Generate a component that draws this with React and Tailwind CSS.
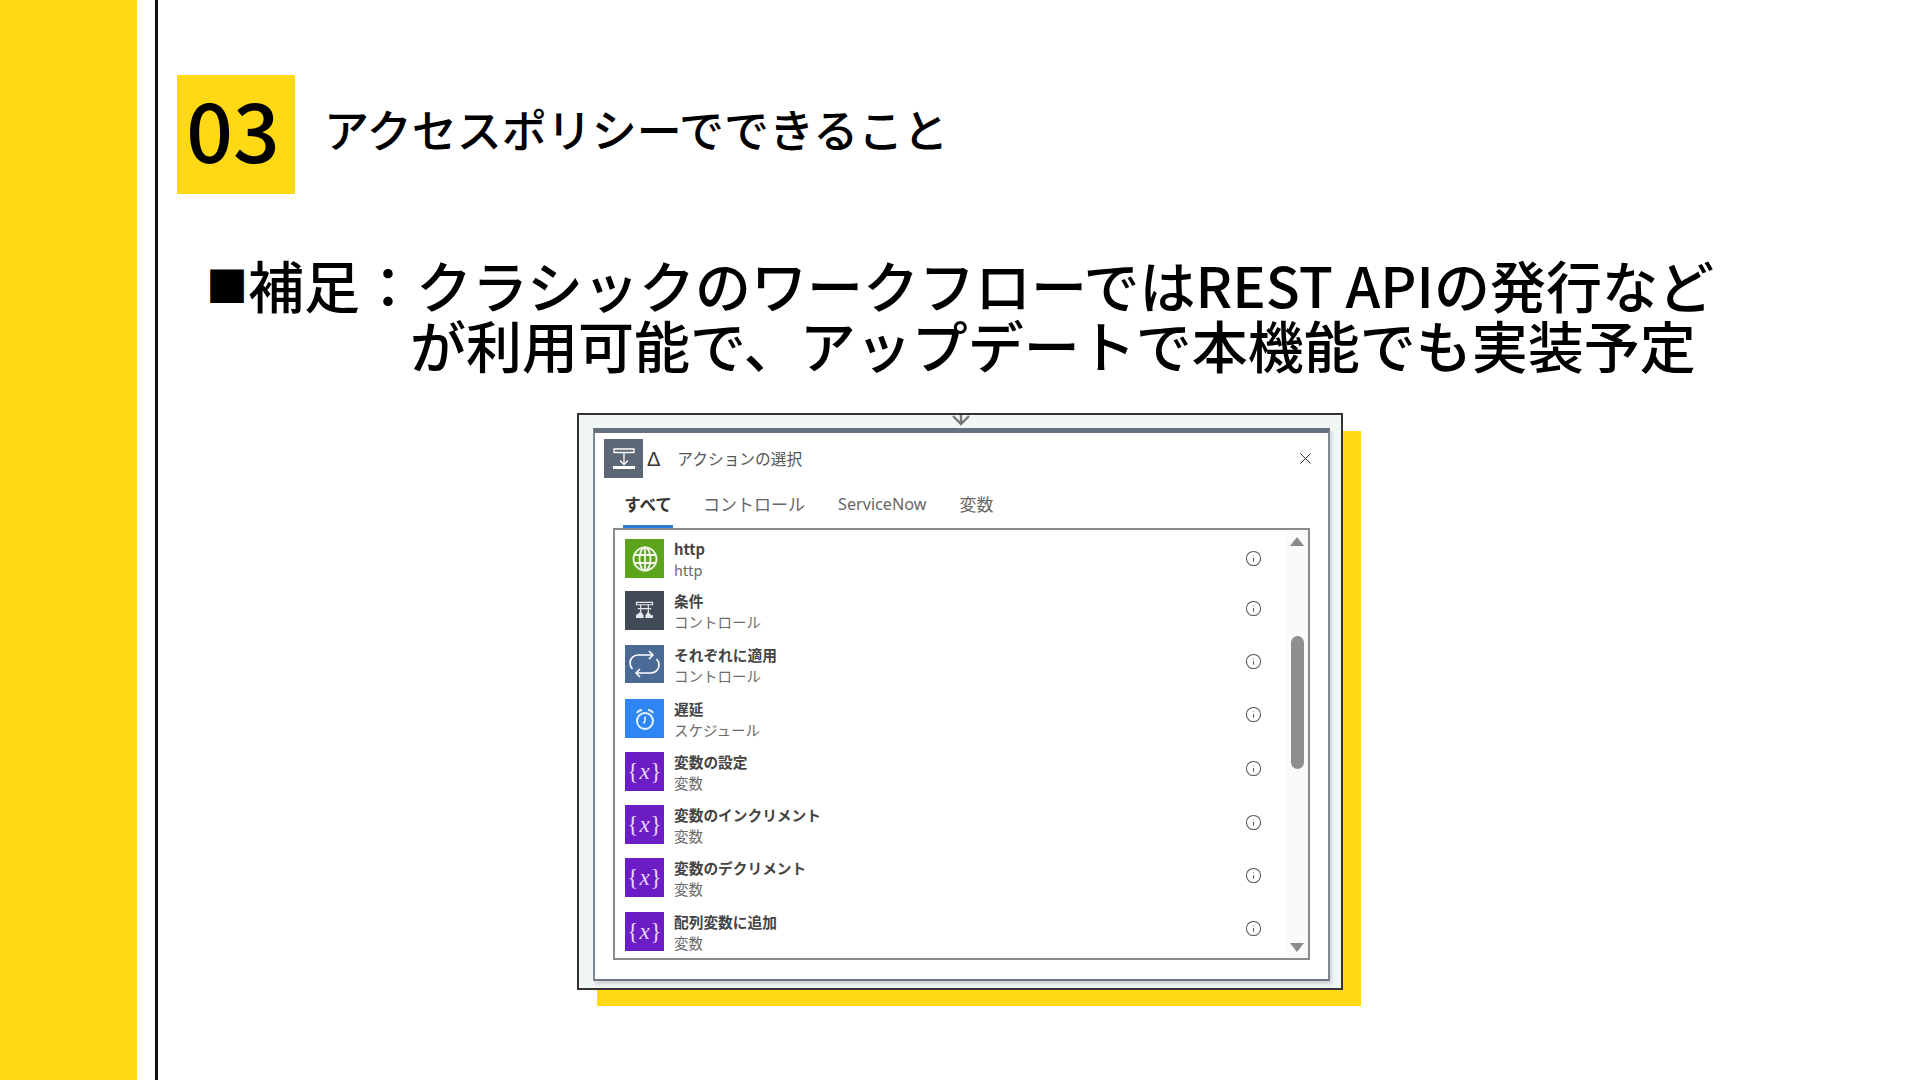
import { Info, X } from "lucide-react";

const jp = "font-['Noto_Sans_CJK_JP','Noto_Sans',sans-serif]";

function GlobeIcon({ className }) {
  return (
    <svg viewBox="0 0 26 26" fill="none" stroke="currentColor" strokeWidth="1.8" className={className}>
      <circle cx="13" cy="13" r="11.5" />
      <ellipse cx="13" cy="13" rx="5.5" ry="11.5" />
      <path d="M13 1.5v23M2.5 9h21M2.5 17h21" />
    </svg>
  );
}

function SplitIcon({ className }) {
  return (
    <svg viewBox="0 0 20 20" fill="none" stroke="currentColor" strokeWidth="1.2" className={className}>
      <path d="M1.5 1.5h17v2.5h-17z" />
      <path d="M6 4v8M14 4v8M3 8h14" />
      <path d="M6 11l3 4v3H1v-3zM14 11l3 4 2 0v3h-8v-3z" fill="currentColor" stroke="none" />
    </svg>
  );
}

function LoopIcon({ className }) {
  return (
    <svg viewBox="0 0 39 38" fill="none" stroke="currentColor" strokeWidth="1.6" className={className}>
      <path d="M27 10H13C8.5 10 5 13.5 5 18c0 2.5 1 4.5 2.5 6" />
      <path d="M24 6l4 4-4 4" />
      <path d="M12 28h14c4.5 0 8-3.5 8-8 0-2.5-1-4.5-2.5-6" />
      <path d="M15 24l-4 4 4 4" />
    </svg>
  );
}

function ClockIcon({ className }) {
  return (
    <svg viewBox="0 0 24 24" fill="none" stroke="currentColor" strokeWidth="2" className={className}>
      <circle cx="12" cy="14" r="8" />
      <path d="M12 9.5V14l-1.5 2.5" strokeWidth="1.6" />
      <path d="M4 6c1-2 3-3 5-3M20 6c-1-2-3-3-5-3" />
    </svg>
  );
}

function TileIcon({ kind }) {
  if (kind === "http")
    return (
      <div className="w-[39px] h-[39px] bg-[#5ba41c] flex items-center justify-center text-[#f2f8ea]">
        <GlobeIcon className="w-[26px] h-[26px]" />
      </div>
    );
  if (kind === "cond")
    return (
      <div className="w-[39px] h-[39px] bg-[#434a57] flex items-center justify-center text-[#e6e8ec]">
        <SplitIcon className="w-[19px] h-[19px]" />
      </div>
    );
  if (kind === "loop")
    return (
      <div className="w-[39px] h-[38px] bg-[#4b6a96] flex items-center justify-center text-white">
        <LoopIcon className="w-[39px] h-[38px]" />
      </div>
    );
  if (kind === "delay")
    return (
      <div className="w-[39px] h-[39px] bg-[#2e86f5] flex items-center justify-center text-[#eaf3ff]">
        <ClockIcon className="w-[24px] h-[24px]" />
      </div>
    );
  return (
    <div className="w-[39px] h-[39px] bg-[#6d1dc6] flex items-center justify-center text-[#e8d9f8] text-[23px] font-['Liberation_Serif',serif] leading-none">
      <span>{"{"}</span>
      <span className="italic px-[1px]">x</span>
      <span>{"}"}</span>
    </div>
  );
}

const rows = [
  { kind: "http", title: "http", sub: "http", h: "h-[52px]", info: "mt-[11px]" },
  { kind: "cond", title: "条件", sub: "コントロール", h: "h-[54px]", info: "mt-[9px]" },
  { kind: "loop", title: "それぞれに適用", sub: "コントロール", h: "h-[54px]", info: "mt-[8px]" },
  { kind: "delay", title: "遅延", sub: "スケジュール", h: "h-[53px]", info: "mt-[7px]" },
  { kind: "var", title: "変数の設定", sub: "変数", h: "h-[53px]", info: "mt-[8px]" },
  { kind: "var", title: "変数のインクリメント", sub: "変数", h: "h-[53px]", info: "mt-[9px]" },
  { kind: "var", title: "変数のデクリメント", sub: "変数", h: "h-[54px]", info: "mt-[9px]" },
  { kind: "var", title: "配列変数に追加", sub: "変数", h: "h-[39px]", info: "mt-[8px]" },
];

function ActionRow({ row }) {
  return (
    <div className={`flex items-start ${row.h}`}>
      <TileIcon kind={row.kind} />
      <div className="ml-[10px] w-[571px]">
        <div className="text-[14.7px] leading-[20px] font-bold text-[#444]">{row.title}</div>
        <div className="text-[14.5px] leading-[20px] text-[#6b6b6b] mt-[1px]">{row.sub}</div>
      </div>
      <Info size={17} strokeWidth={1.5} className={`text-[#555] ${row.info}`} />
    </div>
  );
}

function ActionPicker() {
  return (
    <div className="relative ml-[400px] mt-[39px] w-[766px] h-[577px] border-2 border-[#333] bg-[#f1f7f2] pt-[13px] pl-[14px] shadow-[19px_17px_0_-1px_#ffd816]">
      <svg viewBox="0 0 20 12" className="absolute left-[372px] -top-[1px] w-[20px] h-[12px] text-[#777]" fill="none" stroke="currentColor" strokeWidth="2.4">
        <path d="M2 2l8 8 8-8M10 1v9" />
      </svg>

      <div className="w-[737px] h-[553px] bg-white border-x-2 border-b-2 border-t-[5px] border-x-[#7d8791] border-b-[#6d7680] border-t-[#67707e] shadow-[2px_3px_3px_#cfd6d8] pl-[9px] pr-[19px]">
        <div className="flex items-center mt-[6px] h-[39px]">
          <div className="w-[39px] h-[39px] bg-[#5c6778] flex items-center justify-center text-white">
            <svg viewBox="0 0 26 26" fill="none" stroke="currentColor" strokeWidth="1.3" className="w-[26px] h-[26px]">
              <path d="M3 3h20v3.5H3zM13 6.5v12M9 14.5l4 4 4-4" />
              <path d="M2 20h22v3H2z" fill="currentColor" stroke="none" />
            </svg>
          </div>
          <span className="ml-[4px] text-[20px] leading-none text-[#333] font-['Liberation_Sans',sans-serif]">Δ</span>
          <span className="ml-[17px] text-[15.7px] text-[#555]">アクションの選択</span>
          <X size={19} strokeWidth={1.2} className="ml-auto -mr-[6px] text-[#222]" />
        </div>

        <div className="flex items-start mt-[14px] ml-[19px] h-[36px] text-[17px] leading-[24px] text-[#666]">
          <div className="w-[50px] h-[36px] border-b-[3px] border-[#2b7cd3] font-bold text-[16.5px] text-[#333] text-center">すべて</div>
          <div className="ml-[30px]">コントロール</div>
          <div className="ml-[33px] font-['Noto_Sans',sans-serif] text-[16.2px]">ServiceNow</div>
          <div className="ml-[33px]">変数</div>
        </div>

        <div className="flex w-[697px] h-[432px] border-2 border-[#8a8a8a] bg-white ml-[9px]">
          <div className="flex-1 pl-[10px] pt-[9px] overflow-hidden">
            {rows.map((row) => (
              <ActionRow key={row.title} row={row} />
            ))}
          </div>
          <div className="w-[21px] bg-[#fafafa] flex flex-col items-center pr-[1px]">
            <div className="mt-[7px] w-0 h-0 border-x-[7px] border-x-transparent border-b-[9px] border-b-[#8a8a8a]" />
            <div className="mt-[90px] w-[13px] h-[133px] rounded-full bg-[#8f8f8f]" />
            <div className="mt-auto mb-[6px] w-0 h-0 border-x-[7px] border-x-transparent border-t-[9px] border-t-[#8a8a8a]" />
          </div>
        </div>
      </div>
    </div>
  );
}

export default function App() {
  return (
    <div className={`w-[1920px] h-[1080px] flex overflow-hidden bg-white text-black ${jp}`}>
      <div className="w-[137px] bg-[#ffd816]" />
      <div className="ml-[18px] w-[3px] bg-[#111]" />
      <div className="flex-1 pl-[19px] pt-[75px]">
        <div className="flex items-center">
          <div className="w-[118px] h-[119px] bg-[#ffd816] flex items-center justify-center">
            <span className="text-[82px] leading-none font-medium -mt-[14px] -ml-[6px]">03</span>
          </div>
          <h1 className="ml-[29px] text-[45px] leading-[60px] font-medium -mt-[12px]">アクセスポリシーでできること</h1>
        </div>
        <div className="mt-[60px] ml-[15px] text-[56px] leading-[60px] font-medium whitespace-nowrap">
          <div>
            <span className="inline-block w-[56px] text-right text-[42px] leading-[60px] align-top">■</span>
            補足：クラシックのワークフローではREST APIの発行など
          </div>
          <div className="pl-[218px]">が利用可能で、アップデートで本機能でも実装予定</div>
        </div>
        <ActionPicker />
      </div>
    </div>
  );
}
